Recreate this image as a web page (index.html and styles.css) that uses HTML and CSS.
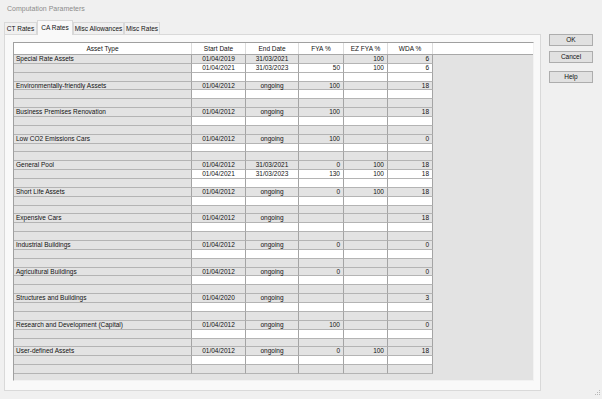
FILE: index.html
```html
<!DOCTYPE html>
<html>
<head>
<meta charset="utf-8">
<link rel="stylesheet" href="styles.css">
</head>
<body>
<div class="window">
  <div class="title">Computation Parameters</div>
  <div class="body">
    <div class="left">
      <div class="tabs">
        <div class="tab t-ct">CT Rates</div>
        <div class="tab t-ca active">CA Rates</div>
        <div class="tab t-ma">Misc Allowances</div>
        <div class="tab t-mr">Misc Rates</div>
      </div>
      <div class="panel">
        <div class="grid">
          <div class="hdr">
            <div class="hc">Asset Type</div>
            <div class="hc">Start Date</div>
            <div class="hc">End Date</div>
            <div class="hc">FYA %</div>
            <div class="hc">EZ FYA %</div>
            <div class="hc">WDA %</div>
          </div>
          <div class="rows">
            <div class="row g"><div class="c">Special Rate Assets</div><div class="d">01/04/2019</div><div class="d">31/03/2021</div><div class="n"></div><div class="n">100</div><div class="n">6</div></div>
            <div class="row w"><div class="c"></div><div class="d">01/04/2021</div><div class="d">31/03/2023</div><div class="n">50</div><div class="n">100</div><div class="n">6</div></div>
            <div class="row w"><div class="c"></div><div class="d"></div><div class="d"></div><div class="n"></div><div class="n"></div><div class="n"></div></div>

            <div class="row g"><div class="c">Environmentally-friendly Assets</div><div class="d">01/04/2012</div><div class="d">ongoing</div><div class="n">100</div><div class="n"></div><div class="n">18</div></div>
            <div class="row w"><div class="c"></div><div class="d"></div><div class="d"></div><div class="n"></div><div class="n"></div><div class="n"></div></div>
            <div class="row g"><div class="c"></div><div class="d"></div><div class="d"></div><div class="n"></div><div class="n"></div><div class="n"></div></div>

            <div class="row g"><div class="c">Business Premises Renovation</div><div class="d">01/04/2012</div><div class="d">ongoing</div><div class="n">100</div><div class="n"></div><div class="n">18</div></div>
            <div class="row w"><div class="c"></div><div class="d"></div><div class="d"></div><div class="n"></div><div class="n"></div><div class="n"></div></div>
            <div class="row g"><div class="c"></div><div class="d"></div><div class="d"></div><div class="n"></div><div class="n"></div><div class="n"></div></div>

            <div class="row g"><div class="c">Low CO2 Emissions Cars</div><div class="d">01/04/2012</div><div class="d">ongoing</div><div class="n">100</div><div class="n"></div><div class="n">0</div></div>
            <div class="row w"><div class="c"></div><div class="d"></div><div class="d"></div><div class="n"></div><div class="n"></div><div class="n"></div></div>
            <div class="row g"><div class="c"></div><div class="d"></div><div class="d"></div><div class="n"></div><div class="n"></div><div class="n"></div></div>

            <div class="row g"><div class="c">General Pool</div><div class="d">01/04/2012</div><div class="d">31/03/2021</div><div class="n">0</div><div class="n">100</div><div class="n">18</div></div>
            <div class="row w"><div class="c"></div><div class="d">01/04/2021</div><div class="d">31/03/2023</div><div class="n">130</div><div class="n">100</div><div class="n">18</div></div>
            <div class="row w"><div class="c"></div><div class="d"></div><div class="d"></div><div class="n"></div><div class="n"></div><div class="n"></div></div>

            <div class="row g"><div class="c">Short Life Assets</div><div class="d">01/04/2012</div><div class="d">ongoing</div><div class="n">0</div><div class="n">100</div><div class="n">18</div></div>
            <div class="row w"><div class="c"></div><div class="d"></div><div class="d"></div><div class="n"></div><div class="n"></div><div class="n"></div></div>
            <div class="row g"><div class="c"></div><div class="d"></div><div class="d"></div><div class="n"></div><div class="n"></div><div class="n"></div></div>

            <div class="row g"><div class="c">Expensive Cars</div><div class="d">01/04/2012</div><div class="d">ongoing</div><div class="n"></div><div class="n"></div><div class="n">18</div></div>
            <div class="row w"><div class="c"></div><div class="d"></div><div class="d"></div><div class="n"></div><div class="n"></div><div class="n"></div></div>
            <div class="row g"><div class="c"></div><div class="d"></div><div class="d"></div><div class="n"></div><div class="n"></div><div class="n"></div></div>

            <div class="row g"><div class="c">Industrial Buildings</div><div class="d">01/04/2012</div><div class="d">ongoing</div><div class="n">0</div><div class="n"></div><div class="n">0</div></div>
            <div class="row w"><div class="c"></div><div class="d"></div><div class="d"></div><div class="n"></div><div class="n"></div><div class="n"></div></div>
            <div class="row g"><div class="c"></div><div class="d"></div><div class="d"></div><div class="n"></div><div class="n"></div><div class="n"></div></div>

            <div class="row g"><div class="c">Agricultural Buildings</div><div class="d">01/04/2012</div><div class="d">ongoing</div><div class="n">0</div><div class="n"></div><div class="n">0</div></div>
            <div class="row w"><div class="c"></div><div class="d"></div><div class="d"></div><div class="n"></div><div class="n"></div><div class="n"></div></div>
            <div class="row g"><div class="c"></div><div class="d"></div><div class="d"></div><div class="n"></div><div class="n"></div><div class="n"></div></div>

            <div class="row g"><div class="c">Structures and Buildings</div><div class="d">01/04/2020</div><div class="d">ongoing</div><div class="n"></div><div class="n"></div><div class="n">3</div></div>
            <div class="row w"><div class="c"></div><div class="d"></div><div class="d"></div><div class="n"></div><div class="n"></div><div class="n"></div></div>
            <div class="row g"><div class="c"></div><div class="d"></div><div class="d"></div><div class="n"></div><div class="n"></div><div class="n"></div></div>

            <div class="row g"><div class="c">Research and Development (Capital)</div><div class="d">01/04/2012</div><div class="d">ongoing</div><div class="n">100</div><div class="n"></div><div class="n">0</div></div>
            <div class="row w"><div class="c"></div><div class="d"></div><div class="d"></div><div class="n"></div><div class="n"></div><div class="n"></div></div>
            <div class="row g"><div class="c"></div><div class="d"></div><div class="d"></div><div class="n"></div><div class="n"></div><div class="n"></div></div>

            <div class="row g"><div class="c">User-defined Assets</div><div class="d">01/04/2012</div><div class="d">ongoing</div><div class="n">0</div><div class="n">100</div><div class="n">18</div></div>
            <div class="row w"><div class="c"></div><div class="d"></div><div class="d"></div><div class="n"></div><div class="n"></div><div class="n"></div></div>
            <div class="row g"><div class="c"></div><div class="d"></div><div class="d"></div><div class="n"></div><div class="n"></div><div class="n"></div></div>
          </div>
        </div>
      </div>
    </div>
    <div class="buttons">
      <div class="btn">OK</div>
      <div class="btn">Cancel</div>
      <div class="btn help">Help</div>
    </div>
  </div>
  <svg class="grip" width="9" height="9" viewBox="0 0 9 9">
    <rect x="7" y="1" width="1" height="1" fill="#b8b8b8"/>
    <rect x="5" y="3" width="1" height="1" fill="#b8b8b8"/>
    <rect x="7" y="3" width="1" height="1" fill="#b8b8b8"/>
    <rect x="3" y="5" width="1" height="1" fill="#b8b8b8"/>
    <rect x="5" y="5" width="1" height="1" fill="#b8b8b8"/>
    <rect x="7" y="5" width="1" height="1" fill="#b8b8b8"/>
  </svg>
</div>
</body>
</html>
```

FILE: styles.css
```css
* { box-sizing: border-box; }
html, body { margin: 0; padding: 0; }
body {
  background: #f0f0f0;
  font-family: "Liberation Sans", Arial, sans-serif;
  font-size: 6.5px;
  color: #111111;
}
.window {
  position: relative;
  width: 602px;
  height: 399px;
  background: #f0f0f0;
  overflow: hidden;
}
.title {
  height: 20px;
  padding-left: 7px;
  line-height: 17px;
  font-size: 7px;
  color: #8c8c8c;
}
.body {
  display: flex;
  padding-left: 4px;
  gap: 8px;
}
.left {
  display: flex;
  flex-direction: column;
}
.tabs {
  display: flex;
  align-items: flex-end;
  height: 14px;
  position: relative;
  z-index: 2;
}
.tab {
  height: 12px;
  line-height: 11px;
  border: 1px solid #d9d9d9;
  border-bottom: none;
  background: #f0f0f0;
  text-align: center;
  white-space: nowrap;
}
.tab.active {
  height: 15px;
  margin-bottom: -1px;
  line-height: 13px;
  background: #f9f9f9;
  border-color: #d9d9d9;
}
.t-ct { width: 33px; }
.t-ca { width: 36px; }
.t-ma { width: 51px; }
.t-mr { width: 36px; }
.panel {
  width: 537px;
  height: 357px;
  border: 1px solid #d9d9d9;
  background: #f9f9f9;
  padding: 7px 6px 9px 8px;
}
.grid {
  width: 521px;
  height: 339px;
  background: #e3e3e3;
  border-top: 1px solid #a0a0a0;
  border-left: 1px solid #a0a0a0;
  border-bottom: 1px solid #f2f2f2;
  border-right: 1px solid #f2f2f2;
}
.hdr, .row {
  display: grid;
  grid-template-columns: 178px 54px 53px 45px 44px 45px;
}
.hdr {
  height: 12px;
  background: #ffffff;
  border-bottom: 1px solid #a8a8a8;
}
.hc {
  text-align: center;
  line-height: 11px;
  border-right: 1px solid #dcdcdc;
  white-space: nowrap;
}
.rows {
  display: flex;
  flex-direction: column;
}
.row {
  height: 8.87px;
}
.row > div {
  border-right: 1px solid #a4a4a4;
  border-bottom: 1px solid #b4b4b4;
  line-height: 7.5px;
  white-space: nowrap;
}
.row .c {
  background: #e3e3e3;
  padding-left: 2px;
}
.row.g .d, .row.g .n { background: #e3e3e3; }
.row.w .d, .row.w .n { background: #ffffff; }
.row .d { text-align: center; }
.row .n { text-align: right; padding-right: 3px; }
.buttons {
  display: flex;
  flex-direction: column;
  padding-top: 14px;
  gap: 5px;
}
.btn {
  width: 44px;
  height: 12px;
  border: 1px solid #adadad;
  background: #e1e1e1;
  text-align: center;
  line-height: 10px;
}
.btn.help { margin-top: 3px; }
.grip {
  position: absolute;
  right: 1px;
  bottom: 1px;
}
```
